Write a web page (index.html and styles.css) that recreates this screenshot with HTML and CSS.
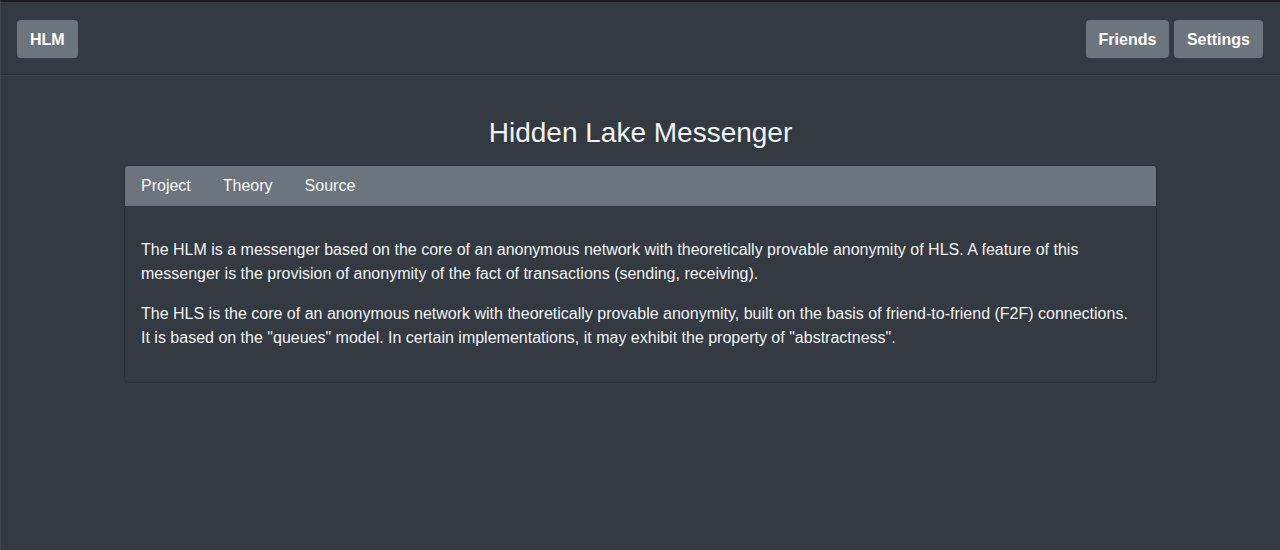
FILE: index.html
```html
<!DOCTYPE html>
<html lang="en">
<head>
    <meta charset="UTF-8">
    <meta name="viewport" content="width=device-width, initial-scale=1.0">
    <title>Hidden Lake Messenger</title>
    <link rel="stylesheet" href="styles.css">
</head>
<body>
    <header class="topbar">
        <a class="btn" href="#">HLM</a>
        <div class="topbar-right">
            <a class="btn btn-friends" href="#">Friends</a>
            <a class="btn" href="#">Settings</a>
        </div>
    </header>

    <main class="container">
        <h1 class="title">Hidden Lake Messenger</h1>
        <div class="card">
            <nav class="card-header">
                <a href="#">Project</a>
                <a href="#">Theory</a>
                <a href="#">Source</a>
            </nav>
            <div class="card-body">
                <p>The HLM is a messenger based on the core of an anonymous network with theoretically provable anonymity of HLS. A feature of this messenger is the provision of anonymity of the fact of transactions (sending, receiving).</p>
                <p>The HLS is the core of an anonymous network with theoretically provable anonymity, built on the basis of friend-to-friend (F2F) connections. It is based on the "queues" model. In certain implementations, it may exhibit the property of "abstractness".</p>
            </div>
        </div>
    </main>
</body>
</html>
```

FILE: styles.css
```css
html, body {
    height: 100%;
}
body {
    margin: 0;
    font-family: "Liberation Sans", Arial, sans-serif;
    font-size: 16px;
    line-height: 1.5;
    background-color: #343a42;
    color: #f1f3f5;
    border-top: 2px solid #1c1d20;
    border-left: 1px solid #41464e;
    box-sizing: border-box;
}
a {
    color: inherit;
    text-decoration: none;
}
.topbar {
    display: flex;
    justify-content: space-between;
    align-items: center;
    padding: 18px 17px 16px 16px;
    border-bottom: 1px solid #2a2f35;
    box-shadow: 0 1px 0 #3d434b;
}
.topbar-right {
    display: flex;
    gap: 5px;
}
.btn {
    display: inline-block;
    padding: 7px 13px 5px;
    background-color: #6c757d;
    color: #fff;
    font-weight: bold;
    border-radius: 4px;
    line-height: 26px;
}
.btn-friends {
    padding: 7px 12.5px 5px;
}
.container {
    width: 1033px;
    margin: 0 auto;
    padding-top: 41px;
}
.title {
    margin: 0 0 15px;
    text-align: center;
    font-weight: normal;
    font-size: 28px;
    line-height: 34px;
}
.card {
    border: 1px solid #2c3137;
    border-radius: 4px;
    overflow: hidden;
}
.card-header {
    display: flex;
    gap: 32px;
    padding: 8px 16px;
    background-color: #6c757d;
    color: #f8f9fa;
}
.card-body {
    padding: 32px 16px 16px;
}
.card-body p {
    margin: 0 0 16px;
}
```
